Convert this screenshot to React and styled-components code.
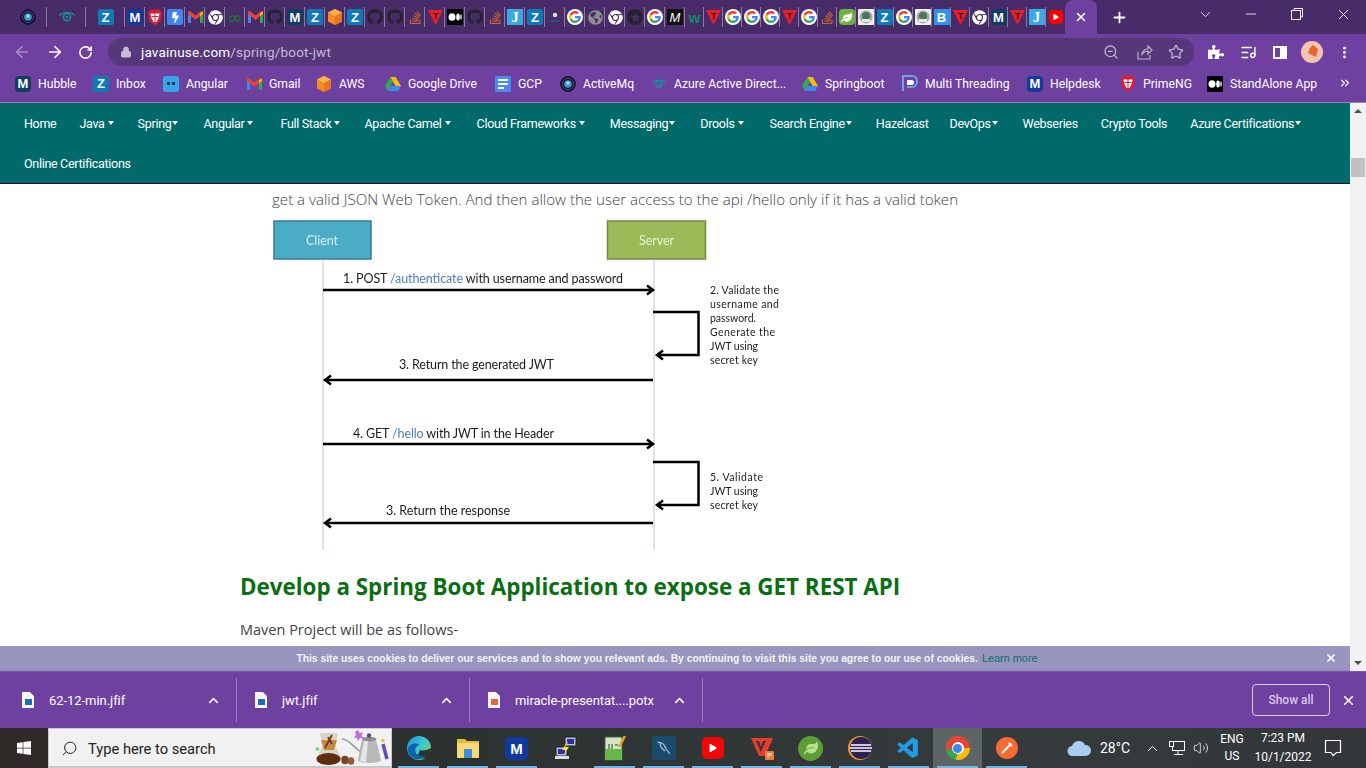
import React from 'react';
import styled, { createGlobalStyle } from 'styled-components';
import { ArrowLeft, ArrowRight, RotateCw, Lock, ZoomOut, Star, ListMusic, MoreVertical, ChevronDown, ChevronUp, ChevronsRight, Minus, X, Plus, Search, Volume2 } from 'lucide-react';
import { FaGithub, FaStackOverflow, FaChrome, FaPuzzlePiece, FaGlobeAmericas, FaBolt, FaStar, FaLeaf, FaWindows, FaPlay } from 'react-icons/fa';
import { VscVscode } from 'react-icons/vsc';

const Global = createGlobalStyle`
  html, body { margin: 0; padding: 0; width: 1366px; height: 768px; overflow: hidden; background: #fff; }
  * { box-sizing: border-box; }
`;

const UI = `"Roboto", "Noto Sans", sans-serif`;

const Screen = styled.div`
  width: 1366px; height: 768px; display: flex; flex-direction: column; font-family: ${UI};
`;

/* ---------- tab strip ---------- */
const TabStrip = styled.div`
  height: 34px; background: #482c6a; display: flex; align-items: stretch; padding-left: 8px; flex: none;
`;
const Tab = styled.div`
  width: ${p => p.$w}px; display: flex; align-items: center; justify-content: center; position: relative; flex: none;
  &::after { content: ''; position: absolute; right: 0; top: 7px; bottom: 7px; width: 1px; background: ${p => p.$noSep ? 'transparent' : '#8b7a9f'}; }
`;
const ActiveTab = styled.div`
  width: 32px; background: #6e409f; border-radius: 8px 8px 0 0; display: flex; align-items: center; justify-content: center; color: #fff; flex: none;
`;
const NewTab = styled.div`
  width: 44px; display: flex; align-items: center; justify-content: center; color: #fff; flex: none;
`;
const WindowControls = styled.div`
  margin-left: auto; display: flex; color: #f4f0f8;
`;
const WindowButton = styled.div`
  width: 46px; display: flex; align-items: center; justify-content: center; padding-bottom: 6px;
`;

const Fav = styled.span`
  width: ${p => p.$s || 16}px; height: ${p => p.$s || 16}px; flex: none; display: inline-flex; align-items: center; justify-content: center;
  background: ${p => p.$bg || 'transparent'}; color: ${p => p.$c || '#fff'}; border-radius: ${p => p.$r ?? 2}px;
  font: ${p => p.$font || `bold 13px "Liberation Sans", sans-serif`};
`;

const GoogleG = ({ s = 16 }) => (
  <Fav $bg="#fff" $r={s} $s={s}>
    <svg width={s - 4} height={s - 4} viewBox="0 0 48 48">
      <path fill="#EA4335" d="M24 9.5c3.54 0 6.71 1.22 9.21 3.6l6.85-6.85C35.9 2.38 30.47 0 24 0 14.62 0 6.51 5.38 2.56 13.22l7.98 6.19C12.43 13.72 17.74 9.5 24 9.5z" />
      <path fill="#4285F4" d="M46.98 24.55c0-1.57-.15-3.09-.38-4.55H24v9.02h12.94c-.58 2.96-2.26 5.48-4.78 7.18l7.73 6c4.51-4.18 7.09-10.36 7.09-17.65z" />
      <path fill="#FBBC05" d="M10.53 28.59c-.48-1.45-.76-2.99-.76-4.59s.27-3.14.76-4.59l-7.98-6.19C.92 16.46 0 20.12 0 24c0 3.88.92 7.54 2.56 10.78l7.97-6.19z" />
      <path fill="#34A853" d="M24 48c6.48 0 11.93-2.13 15.89-5.81l-7.73-6c-2.15 1.45-4.92 2.3-8.16 2.3-6.26 0-11.57-4.22-13.47-9.91l-7.98 6.19C6.51 42.62 14.62 48 24 48z" />
    </svg>
  </Fav>
);
const Gmail = () => (
  <svg width="15" height="12" viewBox="0 0 20 16">
    <path fill="#4285F4" d="M0 3h4v13H1.5A1.5 1.5 0 0 1 0 14.5z" />
    <path fill="#34A853" d="M16 3h4v11.5a1.5 1.5 0 0 1-1.5 1.5H16z" />
    <path fill="#EA4335" d="M0 1.8C0 .3 1.7-.5 3 .4L10 6l7-5.600c1.300-.9 3-.1 3 1.400V4l-4 3-6 4.500L4 7 0 4z" />
    <path fill="#FBBC05" d="M16 3l4-2.200V4l-4 3z" />
  </svg>
);
const Shield = () => (
  <svg width="16" height="17" viewBox="0 0 16 17">
    <path fill="#d81f37" d="M3.500 .5h9l2.500 3-1 8.500-6 4.500L2 12 1 3.500z" />
    <path fill="#fff" d="M3.500 4.500h9l-1 4.500L9.500 13h-3L4.500 9z" />
    <path stroke="#d81f37" strokeWidth="1" d="M8 4v9M4.500 7.500h7" />
  </svg>
);
const Cube = ({ s = 16 }) => (
  <svg width={s} height={s} viewBox="0 0 16 16">
    <path fill="#f58b1f" d="M8 0l7 3.500v9L8 16l-7-3.500v-9z" />
    <path fill="#fbb04e" d="M8 0l7 3.500L8 7 1 3.500z" />
    <path fill="#e9761a" d="M8 7l7-3.500v9L8 16z" />
  </svg>
);
const RedT = () => (
  <svg width="15" height="16" viewBox="0 0 15 16">
    <path fill="#ee1c25" d="M0 1h15L7.500 16z" />
    <text x="7.500" y="10" textAnchor="middle" fontSize="9" fontWeight="700" fontFamily="Liberation Sans" fill="#1a1a2a">T</text>
  </svg>
);
const Eye = () => (
  <svg width="18" height="10" viewBox="0 0 18 10">
    <path fill="none" stroke="#1a8f96" strokeWidth="1.300" d="M1 3.500C5-.5 13-.5 17 3.500" />
    <circle cx="9" cy="5" r="3.600" fill="none" stroke="#1a8f96" strokeWidth="1.600" />
    <circle cx="9" cy="5" r="1.300" fill="#1a8f96" />
  </svg>
);
const ActiveMq = () => (
  <svg width="16" height="16" viewBox="0 0 16 16">
    <circle cx="8" cy="8" r="7.300" fill="#1b1436" stroke="#120d26" />
    <circle cx="8" cy="8" r="5.700" fill="none" stroke="#4a3f78" />
    <circle cx="8" cy="8" r="3.800" fill="#3a9ec4" />
    <circle cx="8" cy="7" r="1.500" fill="#b9e4ef" />
  </svg>
);
const Seal = () => (
  <Fav $bg="#eef0ea" $r={1}>
    <svg width="14" height="14" viewBox="0 0 14 14">
      <circle cx="7" cy="7" r="6.500" fill="#9aaea2" />
      <circle cx="7" cy="6" r="4" fill="#4f7360" />
      <rect x="3" y="9" width="8" height="3" fill="#e4e8e2" />
    </svg>
  </Fav>
);
const Drive = () => (
  <svg width="16" height="14" viewBox="0 0 16 14">
    <path fill="#fbbc05" d="M5.300 0h5.400l5.300 9h-5.400z" />
    <path fill="#34a853" d="M5.300 0L0 9l2.700 5L8 5z" />
    <path fill="#4285f4" d="M5.300 9H16l-2.700 5H2.700z" />
  </svg>
);
const Docs = () => (
  <Fav $bg="#4a8af4" $r={2}>
    <svg width="12" height="12" viewBox="0 0 12 12"><path stroke="#fff" strokeWidth="1.800" d="M1 2h10M1 6h10M1 10h6" /></svg>
  </Fav>
);
const MediumDots = () => (
  <Fav $bg="#000" $r={1}>
    <svg width="14" height="8" viewBox="0 0 14 8"><ellipse cx="4" cy="4" rx="3.500" ry="3.800" fill="#fff" /><ellipse cx="10" cy="4" rx="1.800" ry="3.500" fill="#fff" /><ellipse cx="13" cy="4" rx=".7" ry="3" fill="#fff" /></svg>
  </Fav>
);
const Raindrop = () => (
  <Fav $bg="#35a4e8" $r={3}>
    <svg width="12" height="6" viewBox="0 0 12 6"><rect x="2" y="1" width="3" height="3" rx="1" fill="#2b2b40" /><rect x="7" y="1" width="3" height="3" rx="1" fill="#2b2b40" /></svg>
  </Fav>
);
const SmallDot = () => (
  <svg width="16" height="16" viewBox="0 0 16 16"><circle cx="8" cy="6" r="2.200" fill="#cfe6d4" /><rect x="3" y="11" width="10" height="2" fill="#31506a" /></svg>
);
const Bracket = () => (
  <svg width="16" height="17" viewBox="0 0 16 17">
    <path fill="none" stroke="#6aa6dc" strokeWidth="2" d="M1 16V1h9a5 5 0 0 1 5 5v1a5 5 0 0 1-5 5H5" />
    <path fill="#fff" d="M5 5h4.500a2.500 2.500 0 0 1 0 5H5z" />
  </svg>
);

const FAVS = {
  Z: () => <Fav $bg="#0f7bb6">Z</Fav>,
  M: () => <Fav $bg="#13399a" $r={4}>M</Fav>,
  MD: () => <Fav $bg="#123c62" $r={4}>M</Fav>,
  S: Shield,
  Bolt: () => <Fav $bg="#3f86f0"><FaBolt size={11} /></Fav>,
  Gm: Gmail,
  Ch: () => <FaChrome size={15} color="#fff" />,
  Inf: () => <Fav $c="#1f7a3d" $font={`18px "DejaVu Sans", sans-serif`}>∞</Fav>,
  Gh: () => <FaGithub size={16} color="#25242c" />,
  Cube: () => <Cube />,
  So: () => <FaStackOverflow size={15} color="#c9652a" />,
  T: RedT,
  Med: MediumDots,
  J: () => <Fav $bg="#3aa8e4" $r={0} $font={`bold 15px "Liberation Serif", serif`}>J</Fav>,
  Dot: SmallDot,
  G: GoogleG,
  Gl: () => <FaGlobeAmericas size={15} color="#8f8f8f" />,
  St: () => <Fav $bg="#24222c" $r={8} $c="#482c6a"><FaStar size={9} /></Fav>,
  MI: () => <Fav $bg="#111" $r={0} $font={`italic 13px "Liberation Sans", sans-serif`}>M</Fav>,
  W: () => <Fav $c="#0a8f62" $font={`bold 15px "Liberation Sans", sans-serif`}>w</Fav>,
  Leaf: () => <Fav $bg="#6cb33f" $r={4}><FaLeaf size={11} /></Fav>,
  Seal,
  B: () => <Fav $bg="#2f93e6" $r={0}>B</Fav>,
  Yt: () => <Fav $bg="#f00" $r={3} $s={14}><FaPlay size={6} /></Fav>,
};

const tabs20 = 'M S Bolt Gm Ch Inf Gm Gh MD Z Cube Z Gh Gh So T Med Gh So J Z Dot G Gl Ch St G MI'.split(' ');
const tabs19 = 'W T G G G T G So Leaf Seal Z G Seal B T Ch MD T J Yt'.split(' ');

/* ---------- toolbar ---------- */
const Toolbar = styled.div`
  height: 36px; background: #6e409f; display: flex; align-items: flex-start; padding: 4px 0 0 0; flex: none; color: #fff;
`;
const NavBtn = styled.div`
  width: ${p => p.$w || 32}px; height: 28px; display: flex; align-items: center; justify-content: center; flex: none;
  color: ${p => p.$c || '#fff'};
`;
const BackBtn = styled(NavBtn)`
  padding-left: 6px;
`;
const Omnibox = styled.div`
  width: 1086px; height: 28px; margin: 0 6px 0 8px; background: #55377a; border-radius: 14px; display: flex; align-items: center; flex: none; padding: 0 10px 0 12px;
`;
const Url = styled.div`
  margin-left: 9px; font-size: 13.500px; color: #fff; letter-spacing: .2px;
  span { color: #c8b8dc; }
`;
const OmniIcons = styled.div`
  margin-left: auto; display: flex; align-items: center; gap: 15px; color: #bdaed0;
`;
const ShareIcon = styled.svg`
  margin-left: 3px;
`;
const Panel = styled.span`
  width: 14px; height: 13px; border: 2px solid #fff; display: block; background: linear-gradient(90deg, transparent 50%, #fff 50%);
`;
const Avatar = styled.span`
  width: 22px; height: 22px; border-radius: 50%; background: #f3c5ae; display: flex; align-items: center; justify-content: center; overflow: hidden;
`;

/* ---------- bookmarks ---------- */
const Bookmarks = styled.div`
  height: 33px; background: #6e409f; border-bottom: 1px solid #9c7fc1; display: flex; align-items: center; padding: 0 0 5px 15px; flex: none; position: relative;
`;
const Bookmark = styled.div`
  width: ${p => p.$w}px; flex: none; display: flex; align-items: center; gap: 7px; color: #fff; font-size: 12.200px; white-space: nowrap;
`;
const More = styled.div`
  position: absolute; right: 14px; top: 5px; color: #fff;
`;
const IconBox = styled.span`
  width: 16px; flex: none; display: flex; justify-content: center;
`;

const BOOKMARKS = [
  ['Hubble', () => <Fav $bg="#123c62" $r={4}>M</Fav>, 78],
  ['Inbox', () => <Fav $bg="#0f7bb6">Z</Fav>, 70],
  ['Angular', Raindrop, 83],
  ['Gmail', Gmail, 70],
  ['AWS', () => <Cube />, 69],
  ['Google Drive', Drive, 110],
  ['GCP', Docs, 65],
  ['ActiveMq', ActiveMq, 91],
  ['Azure Active Direct...', Eye, 151],
  ['Springboot', Drive, 100],
  ['Multi Threading', Bracket, 125],
  ['Helpdesk', () => <Fav $bg="#13399a" $r={4}>M</Fav>, 93],
  ['PrimeNG', Shield, 87],
  ['StandAlone App', MediumDots, 130],
];

/* ---------- page ---------- */
const Main = styled.div`
  flex: 1; display: flex; min-height: 0;
`;
const Viewport = styled.div`
  width: 1350px; display: flex; flex-direction: column; background: #fff; overflow: hidden;
`;
const Nav = styled.nav`
  background: #006a6a; border-bottom: 1px solid #0b1f1f; height: 81px; flex: none; display: flex; flex-wrap: wrap; align-content: flex-start; padding-left: 12px;
`;
const NavItem = styled.a`
  height: 40px; padding: 0 12px; margin-right: ${p => p.$adj || 0}px; display: flex; align-items: center; color: #fff; font-size: 12.500px; white-space: nowrap; font-family: "Roboto", sans-serif; letter-spacing: -.3px;
`;
const Caret = styled.span`
  display: inline-block; width: 0; height: 0; margin-left: ${p => p.$ml}px; border-left: 3.500px solid transparent; border-right: 3.500px solid transparent; border-top: 4px solid #fff;
`;
const NAV = [
  ['Home', null, -1],
  ['Java ', 3, 0],
  ['Spring', 1, 1],
  ['Angular ', 3, 3],
  ['Full Stack ', 3, 0],
  ['Apache Camel ', 3, 2],
  ['Cloud Frameworks ', 3, 1],
  ['Messaging', 1, 1],
  ['Drools ', 3, 2],
  ['Search Engine', 1, 0],
  ['Hazelcast', null, -3],
  ['DevOps', 1, 1],
  ['Webseries', null, -1],
  ['Crypto Tools', null, -1],
  ['Azure Certifications', 1, 0],
  ['Online Certifications', null, 0],
];
const Content = styled.div`
  flex: 1; min-height: 0; overflow: hidden; padding-left: 240px;
`;
const Lead = styled.p`
  margin: 5px 0 0 32px; font: 300 15.100px/20px "Open Sans", sans-serif; color: #444; white-space: nowrap;
`;
const Diagram = styled.svg`
  display: block; margin: 10px 0 0 32px; filter: blur(.25px);
`;
const Heading = styled.h2`
  margin: 22px 0 0; font: 700 22.400px/30px "Open Sans", sans-serif; color: #0a6e12; white-space: nowrap;
`;
const Sub = styled.p`
  margin: 18px 0 0; font: 400 14.500px/20px "Open Sans", sans-serif; color: #444;
`;
const Cookie = styled.div`
  height: 25px; flex: none; background: #9895be; border-bottom: 1px solid #8e86b6; display: flex; align-items: center; justify-content: center; position: relative; color: #f3f3f6;
  font: bold 10.300px "Liberation Sans", sans-serif; padding-right: 16px;
  a { color: #0d6f75; font-weight: 400; font-size: 10.900px; margin-left: 4px; }
`;
const CookieClose = styled.span`
  position: absolute; right: 13px; top: 6px; color: #fff; display: flex;
`;
const Scrollbar = styled.div`
  width: 16px; background: #f1f1f1; display: flex; flex-direction: column; align-items: center;
`;
const ScrollArrow = styled.span`
  width: 0; height: 0; border-left: 4px solid transparent; border-right: 4px solid transparent;
  ${p => p.$up ? 'border-bottom: 4px solid #505050; margin-top: 6px;' : 'border-top: 4px solid #505050; margin-top: auto; margin-bottom: 6px;'}
`;
const ScrollThumb = styled.span`
  width: 14px; height: 19px; background: #c1c1c1; margin-top: 45px;
`;

const LABELS = [
  ['Client', 34, 26, 32, 12.5, '#d8eef4'],
  ['Server', 367, 26, 35, 12.5, '#e9f1d6'],
  ['2. Validate the', 438, 75, 69, 10.5],
  ['username and', 438, 89, 69, 10.5],
  ['password.', 438, 103, 46, 10.5],
  ['Generate the', 438, 117, 65, 10.5],
  ['JWT using', 438, 131, 48, 10.5],
  ['secret key', 438, 145, 48, 10.5],
  ['3. Return the generated JWT', 127, 150, 155, 12.5],
  ['5. Validate', 438, 262, 53, 10.5],
  ['JWT using', 438, 276, 48, 10.5],
  ['secret key', 438, 290, 48, 10.5],
  ['3. Return the response', 114, 296, 124, 12.5],
];
const ARROWS = [
  'M51 71H381M375 66.500l6 4.500-6 4.500',
  'M381 93H426.500V136H385M391 131.500l-6 4.500 6 4.500',
  'M381 161H53M59 156.500l-6 4.500 6 4.500',
  'M51 225H381M375 220.500l6 4.500-6 4.500',
  'M381 243H426.500V286H385M391 281.500l-6 4.500 6 4.500',
  'M381 304H53M59 299.500l-6 4.500 6 4.500',
];

const SequenceDiagram = () => (
  <Diagram width="540" height="331" viewBox="0 0 540 331">
    <rect x="2" y="2" width="97" height="38" fill="#4bacc6" stroke="#357d91" strokeWidth="1.500" />
    <rect x="335.500" y="2" width="98" height="38" fill="#9bbb59" stroke="#71893f" strokeWidth="1.500" />
    <path d="M51 40V331M382 40V331" stroke="#a8c2de" strokeWidth=".9" fill="none" />
    {ARROWS.map(d => <path key={d} d={d} fill="none" stroke="#000" strokeWidth="2.500" />)}
    <text x="71" y="64" fontFamily="Lato, sans-serif" fontSize="12.500" fill="#1c1c1c" textLength="280">1. POST <tspan fill="#4f81bd">/authenticate</tspan> with username and password</text>
    <text x="81" y="219" fontFamily="Lato, sans-serif" fontSize="12.500" fill="#1c1c1c" textLength="201">4.  GET <tspan fill="#4f81bd">/hello</tspan> with JWT in the Header</text>
    {LABELS.map(([t, x, y, w, fs, c]) => (
      <text key={t + y} x={x} y={y} fontFamily="Lato, sans-serif" fontSize={fs} fill={c || '#1c1c1c'} textLength={w}>{t}</text>
    ))}
  </Diagram>
);

/* ---------- downloads ---------- */
const Shelf = styled.div`
  height: 57px; background: #6e409f; flex: none; display: flex; align-items: center; border-top: 1px solid #7d5aa8;
`;
const DlItem = styled.div`
  width: ${p => p.$w || 233}px; height: 44px; flex: none; display: flex; align-items: center; border-right: 1px solid #9b80bd; color: #fff; font-size: 13px; padding-left: ${p => p.$pl}px; padding-right: 15px; white-space: nowrap; letter-spacing: -.05px;
`;
const DlName = styled.span`
  margin-left: 15px;
`;
const DlChevron = styled.span`
  margin-left: auto; display: flex;
`;
const DlIcon = styled.span`
  width: 12px; height: 16px; background: #f6f6f6; flex: none; display: flex; align-items: flex-end; justify-content: center; padding-bottom: 3px;
  clip-path: polygon(0 0, 65% 0, 100% 25%, 100% 100%, 0 100%);
`;
const DlThumb = styled.span`
  width: 7px; height: 6px; background: ${p => p.$c}; display: block;
`;
const ShowAll = styled.div`
  margin-left: auto; width: 78px; height: 32px; border: 1px solid #d9cfe6; border-radius: 4px; color: #d6c9ee; font-size: 12px; font-weight: 500; display: flex; align-items: center; justify-content: center;
`;
const ShelfClose = styled.div`
  width: 36px; display: flex; justify-content: center; color: #fff;
`;

/* ---------- taskbar ---------- */
const Taskbar = styled.div`
  height: 40px; flex: none; display: flex; align-items: center; background: linear-gradient(90deg, #2d2826 0%, #2c3231 35%, #353b3c 70%, #333739 100%); color: #fff;
`;
const Start = styled.div`
  width: 48px; height: 40px; flex: none; display: flex; align-items: center; justify-content: center; background: #2f2a28;
`;
const SearchBox = styled.div`
  width: 344px; height: 40px; flex: none; background: #f1f1f1; border: 1px solid #c8c8c8; border-width: 1px 1px 2px 1px; display: flex; align-items: center; padding: 2px 0 0 12px; color: #222; font-size: 14.700px; gap: 10px; position: relative;
`;
const Kettle = styled.svg`
  position: absolute; right: 0; top: 0;
`;
const Apps = styled.div`
  display: flex; height: 40px; margin-left: 2px; flex: none;
`;
const AppSlot = styled.div`
  width: 49px; height: 40px; display: flex; align-items: center; justify-content: center; position: relative; background: ${p => p.$active ? '#5d6564' : 'transparent'};
  &::after { content: ''; position: absolute; left: 4px; right: 4px; bottom: 0; height: 2px; background: ${p => p.$open ? '#6eb5e8' : 'transparent'}; }
`;
const Round = styled.span`
  width: ${p => p.$s || 22}px; height: ${p => p.$s || 22}px; border-radius: ${p => p.$r || '50%'}; background: ${p => p.$bg}; display: flex; align-items: center; justify-content: center; color: #fff; overflow: hidden; flex: none;
  font: ${p => p.$font || 'bold 15px "Liberation Sans", sans-serif'};
`;
const Tray = styled.div`
  margin-left: 36px; display: flex; align-items: center; color: #fff; flex: 1; height: 40px;
`;
const Temp = styled.span`
  font-size: 14px; margin-left: 8px; width: 40px;
`;
const TrayIcon = styled.span`
  width: ${p => p.$w || 24}px; display: flex; justify-content: center; flex: none;
`;
const Stack = styled.div`
  display: flex; flex-direction: column; align-items: center; font-size: 12px; line-height: ${p => p.$lh}px; width: ${p => p.$w}px; flex: none; margin-left: ${p => p.$ml || 0}px;
`;
const Notify = styled.span`
  margin-left: 16px; display: flex;
`;

const Restore = () => (
  <svg width="12" height="12" viewBox="0 0 12 12" fill="none" stroke="currentColor"><rect x=".5" y="2.500" width="9" height="9" /><path d="M3 2.500V.5h8.500V9H9.500" /></svg>
);

const Edge = () => (
  <svg width="24" height="24" viewBox="0 0 24 24">
    <defs><linearGradient id="edge" x1="0" y1="0" x2="1" y2=".6"><stop offset="0" stopColor="#1a8fd8" /><stop offset=".55" stopColor="#38c4d8" /><stop offset="1" stopColor="#62d66e" /></linearGradient></defs>
    <circle cx="12" cy="12" r="12" fill="url(#edge)" />
    <path fill="#2c3231" d="M13 14c3 1 8 0 11-2v1c0 4-2 7-5 9-4 1-7 0-8-3z" />
    <path fill="#0f5fae" d="M1 14C1 8 8 6 13 9 9 9 7 13 9 17c2 3 7 4 10 2-3 4-9 6-13 3-3-2-5-5-5-8z" />
  </svg>
);

export default function App() {
  return (
    <Screen>
      <Global />
      <TabStrip>
        <Tab $w={39}><ActiveMq /></Tab>
        <Tab $w={39}><Eye /></Tab>
        <Tab $w={39}><FAVS.Z /></Tab>
        {tabs20.map((k, i) => { const F = FAVS[k]; return <Tab key={i} $w={20}><F /></Tab>; })}
        {tabs19.map((k, i) => { const F = FAVS[k]; return <Tab key={i} $w={19} $noSep={k === 'Yt'}><F /></Tab>; })}
        <ActiveTab><X size={14} strokeWidth={2.500} /></ActiveTab>
        <NewTab><Plus size={17} strokeWidth={2.500} /></NewTab>
        <WindowControls>
          <WindowButton><ChevronDown size={17} strokeWidth={1.200} /></WindowButton>
          <WindowButton><Minus size={16} strokeWidth={1.300} /></WindowButton>
          <WindowButton><Restore /></WindowButton>
          <WindowButton><X size={17} strokeWidth={1.300} /></WindowButton>
        </WindowControls>
      </TabStrip>
      <Toolbar>
        <BackBtn $c="#a88fc6" $w={38}><ArrowLeft size={18} /></BackBtn>
        <NavBtn $w={33}><ArrowRight size={18} strokeWidth={2.200} /></NavBtn>
        <NavBtn $w={29}><RotateCw size={15} strokeWidth={2.500} /></NavBtn>
        <Omnibox>
          <Lock size={12} color="#c5b8d6" fill="#c5b8d6" />
          <Url>javainuse.com<span>/spring/boot-jwt</span></Url>
          <OmniIcons>
            <ZoomOut size={16} />
            <ShareIcon width="16" height="16" viewBox="0 0 16 16" fill="none" stroke="currentColor" strokeWidth="1.200"><path d="M1 8v7h12v-4M5 10c1-4 4-5 6-5V2l4 4-4 4V7c-2 0-4 1-6 3z" /></ShareIcon>
            <Star size={16} />
          </OmniIcons>
        </Omnibox>
        <NavBtn><FaPuzzlePiece size={16} /></NavBtn>
        <NavBtn><ListMusic size={17} /></NavBtn>
        <NavBtn><Panel /></NavBtn>
        <NavBtn><Avatar><svg width="16" height="16" viewBox="0 0 16 16"><path fill="#e8642a" d="M9 1l5 4-2 8-4-2-4-2 2-5z" /></svg></Avatar></NavBtn>
        <NavBtn><MoreVertical size={15} strokeWidth={2.500} /></NavBtn>
      </Toolbar>
      <Bookmarks>
        {BOOKMARKS.map(([label, I, w]) => (
          <Bookmark key={label} $w={w}><IconBox><I /></IconBox>{label}</Bookmark>
        ))}
        <More><ChevronsRight size={14} /></More>
      </Bookmarks>
      <Main>
        <Viewport>
          <Nav>
            {NAV.map(([label, ml, adj]) => (
              <NavItem key={label} $adj={adj}>{label}{ml !== null && <Caret $ml={ml} />}</NavItem>
            ))}
          </Nav>
          <Content>
            <Lead>get a valid JSON Web Token. And then allow the user access to the api /hello only if it has a valid token</Lead>
            <SequenceDiagram />
            <Heading>Develop a Spring Boot Application to expose a GET REST API</Heading>
            <Sub>Maven Project will be as follows-</Sub>
          </Content>
          <Cookie>
            This site uses cookies to deliver our services and to show you relevant ads. By continuing to visit this site you agree to our use of cookies.
            <a>Learn more</a>
            <CookieClose><X size={12} strokeWidth={3.500} /></CookieClose>
          </Cookie>
        </Viewport>
        <Scrollbar>
          <ScrollArrow $up />
          <ScrollThumb />
          <ScrollArrow />
        </Scrollbar>
      </Main>
      <Shelf>
        <DlItem $w={237} $pl={22}><DlIcon><DlThumb $c="#1c6fb0" /></DlIcon><DlName>62-12-min.jfif</DlName><DlChevron><ChevronUp size={15} strokeWidth={2.500} /></DlChevron></DlItem>
        <DlItem $pl={18}><DlIcon><DlThumb $c="#1c6fb0" /></DlIcon><DlName>jwt.jfif</DlName><DlChevron><ChevronUp size={15} strokeWidth={2.500} /></DlChevron></DlItem>
        <DlItem $pl={18}><DlIcon><DlThumb $c="#e2673a" /></DlIcon><DlName>miracle-presentat....potx</DlName><DlChevron><ChevronUp size={15} strokeWidth={2.500} /></DlChevron></DlItem>
        <ShowAll>Show all</ShowAll>
        <ShelfClose><X size={15} strokeWidth={2.500} /></ShelfClose>
      </Shelf>
      <Taskbar>
        <Start><FaWindows size={16} color="#fff" /></Start>
        <SearchBox>
          <Search size={17} strokeWidth={1.400} style={{ transform: 'scaleX(-1)' }} />
          Type here to search
          <Kettle width="76" height="38" viewBox="0 0 76 38">
            <circle cx="2.500" cy="20" r="1.800" fill="#5fd67a" />
            <path fill="#d9d4c8" d="M5 4h18l-3 12 7 14H1l7-14z" />
            <path fill="#c98a3c" d="M6 11h16l-3 10H9z" />
            <path stroke="#6b3a1a" strokeWidth="1.800" fill="none" d="M10 19l7-13M13 8l4 7" />
            <ellipse cx="13.500" cy="30" rx="12" ry="6" fill="#5e2c10" />
            <ellipse cx="30" cy="31" rx="3.800" ry="4.200" fill="#7a4028" />
            <ellipse cx="36" cy="32" rx="3.300" ry="3.800" fill="#93563a" />
            <path fill="none" stroke="#9a9a9a" strokeWidth="1.500" d="M46 23C39 19 33 9 27 10" />
            <path fill="#b8b8b8" d="M47 11h14c2 8 4 15 5 21-6 2.500-17 2.500-23 0 1-7 2-14 4-21z" />
            <path fill="#e6e6e6" d="M49 12h4l-2 21-6-1z" />
            <ellipse cx="54" cy="10" rx="7.500" ry="2.200" fill="#8e8e8e" />
            <circle cx="54" cy="6.500" r="2.200" fill="#5b4a80" />
            <path fill="#c86ae0" d="M43 1l1.500 3 3.500-.5-1.500 3 2 2.500-3.500 0L43 12l-1-3-3.500-.5 2.500-2-1-3.500z" />
            <path stroke="#5f50b4" strokeWidth="3.500" d="M68 15l4 15" />
            <circle cx="68" cy="11.500" r="1.800" fill="#f5b83a" />
          </Kettle>
        </SearchBox>
        <Apps>
          <AppSlot $open><Edge /></AppSlot>
          <AppSlot $open><svg width="22" height="20" viewBox="0 0 22 20"><path fill="#e8b93c" d="M0 1h8l2 2h12v17H0z" /><path fill="#f9d976" d="M0 5h22v15H0z" /><rect x="7" y="11" width="8" height="9" fill="#3b8fd6" /></svg></AppSlot>
          <AppSlot $open><Round $r="5px" $s={23} $bg="#0f3aa0">M</Round></AppSlot>
          <AppSlot><svg width="22" height="24" viewBox="0 0 22 24"><rect x="10" y="1" width="11" height="9" fill="#b8c4d8" stroke="#222" /><rect x="12" y="3" width="7" height="5" fill="#2a2fa8" /><rect x="1" y="11" width="11" height="9" fill="#b8c4d8" stroke="#222" /><rect x="3" y="13" width="7" height="5" fill="#2a2fa8" /><path d="M12 6L7 14h4l-3 6 6-9h-4l3-5z" fill="#ffe13a" /><rect x="0" y="20" width="14" height="3" fill="#ddd" /></svg></AppSlot>
          <AppSlot $open><svg width="22" height="26" viewBox="0 0 22 26"><rect x="1" y="2" width="17" height="23" fill="#cfe8c0" stroke="#4a5a40" /><rect x="1" y="14" width="17" height="11" fill="#64b94a" /><path d="M5 9v5M8 9v5M11 10h3" stroke="#333" /><path d="M15 12L21 1" stroke="#e8a030" strokeWidth="2.500" /></svg></AppSlot>
          <AppSlot $open><Round $r="3px" $s={24} $bg="#1c4a6e">
            <svg width="18" height="18" viewBox="0 0 18 18" fill="none" stroke="#a8c8da" strokeWidth="1.200"><path d="M2 3c5 0 8 3 9 7l4 5M5 4c0 3 2 6 5 8" /></svg>
          </Round></AppSlot>
          <AppSlot $open><Round $r="5px" $bg="#f00808"><FaPlay size={8} /></Round></AppSlot>
          <AppSlot $open><svg width="24" height="24" viewBox="0 0 24 24"><path fill="#e83a30" d="M1 2h22l-8 18H9zM6 5l5 11 2-5 3-6h-3l-2 6-2-6z" fillRule="evenodd" /><rect x="15" y="15" width="9" height="9" rx="1" fill="#ef7a3a" /><text x="19.500" y="22" textAnchor="middle" fontSize="7" fill="#fff" fontFamily="Liberation Sans">P</text></svg></AppSlot>
          <AppSlot $open><Round $s={25} $bg="#5d9e34"><FaLeaf size={14} color="#b9e08c" /></Round></AppSlot>
          <AppSlot $open><svg width="24" height="24" viewBox="0 0 24 24"><circle cx="12" cy="12" r="12" fill="#f19a2a" /><circle cx="13" cy="12" r="11" fill="#2c2255" /><path d="M3 9h20M2 12h22M3 15h20" stroke="#fff" strokeWidth="1.500" /></svg></AppSlot>
          <AppSlot $open><VscVscode size={25} color="#1f9ce6" /></AppSlot>
          <AppSlot $open $active><Round $s={24} $bg="conic-gradient(from -100deg, #ea4335 0 190deg, #fbbc05 190deg 290deg, #34a853 290deg 360deg)"><Round $s={12} $bg="#fff"><Round $s={9} $bg="#4285f4" /></Round></Round></AppSlot>
          <AppSlot $open><Round $bg="#f76935"><svg width="14" height="14" viewBox="0 0 14 14"><path d="M2 12L10 4M9 2l3 3" stroke="#fff" strokeWidth="2" /></svg></Round></AppSlot>
        </Apps>
        <Tray>
          <svg width="25" height="16" viewBox="0 0 25 16"><path fill="#a8cdf0" d="M6 16a5 5 0 0 1-1-10 7 7 0 0 1 13-1 5.500 5.500 0 0 1 1 11z" /></svg>
          <Temp>28°C</Temp>
          <TrayIcon $w={24}><ChevronUp size={17} strokeWidth={1.400} /></TrayIcon>
          <TrayIcon $w={26}><svg width="16" height="16" viewBox="0 0 16 16" fill="none" stroke="#fff"><rect x="3.500" y="1.500" width="12" height="9" /><rect x=".5" y="1.500" width="4" height="5" fill="#333" /><path d="M9 11v3M5 14.500h9" /></svg></TrayIcon>
          <TrayIcon $w={22}><Volume2 size={16} strokeWidth={1.200} /></TrayIcon>
          <Stack $w={30} $ml={5} $lh={17}><span>ENG</span><span>US</span></Stack>
          <Stack $w={50} $ml={11} $lh={19}><span>7:23 PM</span><span>10/1/2022</span></Stack>
          <Notify><svg width="18" height="18" viewBox="0 0 18 18" fill="none" stroke="#fff" strokeWidth="1.200"><path d="M1.500 1.500h15v12h-4l-3.500 3-2-3h-5.500z" /></svg></Notify>
        </Tray>
      </Taskbar>
    </Screen>
  );
}
